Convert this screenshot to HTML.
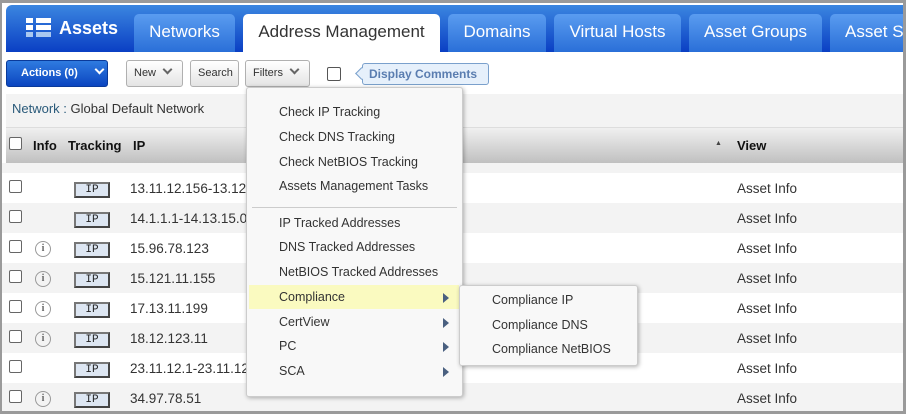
<!DOCTYPE html>
<html><head><style>
*{box-sizing:border-box;margin:0;padding:0}
body{width:906px;height:414px;overflow:hidden;background:#9a9a9a;font-family:"Liberation Sans",sans-serif;position:relative}
#frame{position:absolute;left:2px;top:3px;width:901px;height:408px;background:#fff;overflow:hidden}
.hdr{position:absolute;left:4px;top:2px;width:897px;height:47px;background:linear-gradient(#3b86e0,#0a3fc4);border-radius:6px 0 0 0}
.logo{position:absolute;left:22px;top:15px;color:#fff;font-weight:bold;font-size:18px}
.tab{position:absolute;top:11px;height:38px;background:linear-gradient(#5a9cf0,#2a6fd8);color:#fff;font-size:17px;text-align:center;line-height:36px;border-radius:5px 5px 0 0}
.tab.act{background:#fff;color:#333}
.btn{position:absolute;top:57px;height:27px;border:1px solid #b0b0b0;border-radius:3px;background:linear-gradient(#fff,#e4e4e4);font-size:11px;color:#333;line-height:25px;padding-left:7px}
.chev{display:inline-block;width:7px;height:7px;border-right:2px solid #666;border-bottom:2px solid #666;transform:rotate(45deg);margin-left:8px;position:relative;top:-3px}
.row{position:absolute;left:0;width:901px;height:30px;font-size:13.5px;color:#333}
.row.g{background:#f3f3f3}
.cb{position:absolute;left:7px;top:7px;width:13px;height:13px;border:1px solid #666;border-radius:2px;background:#fff}
.inf{position:absolute;left:33px;top:8px;width:16px;height:16px;border:1px solid #999;border-radius:50%;font-size:10px;color:#666;text-align:center;line-height:14px;font-family:"Liberation Serif",serif;font-weight:bold}
.ipb{position:absolute;left:72px;top:9px;width:36px;height:16px;border:2px solid #777;border-right-color:#444;border-bottom-color:#444;background:#dde6f2;font-size:11px;text-align:center;line-height:12px;color:#222;font-family:"Liberation Mono",monospace}
.ipt{position:absolute;left:128px;top:8px}
.vw{position:absolute;left:735px;top:8px}
.menu{position:absolute;left:244px;top:84px;width:217px;height:310px;background:#f8f8f8;border:1px solid #ccc;border-radius:3px;box-shadow:1px 1px 4px rgba(0,0,0,.3);font-size:12.5px;color:#333}
.mi{position:absolute;left:32px}
.arr{position:absolute;left:196px;width:0;height:0;border-left:6px solid #4a6080;border-top:5px solid transparent;border-bottom:5px solid transparent}
.sub{position:absolute;left:457px;top:282px;width:179px;height:81px;background:#f8f8f8;border:1px solid #ccc;border-radius:3px;box-shadow:1px 1px 4px rgba(0,0,0,.3);font-size:12.5px;color:#333}
</style></head><body>
<div id="frame">
<div class="hdr"></div>
<svg style="position:absolute;left:24px;top:15px" width="26" height="20"><rect x="0" y="0" width="7" height="5" fill="#fff"/><rect x="10" y="0" width="15" height="5" fill="#fff"/><rect x="0" y="7" width="7" height="5" fill="#fff"/><rect x="10" y="7" width="15" height="5" fill="#fff"/><rect x="0" y="14" width="7" height="5" fill="#aac8f0"/><rect x="10" y="14" width="15" height="5" fill="#aac8f0"/></svg>
<div class="logo" style="left:57px">Assets</div>
<div class="tab" style="left:132px;width:101px">Networks</div>
<div class="tab act" style="left:241px;width:197px">Address Management</div>
<div class="tab" style="left:446px;width:98px">Domains</div>
<div class="tab" style="left:552px;width:127px">Virtual Hosts</div>
<div class="tab" style="left:687px;width:133px">Asset Groups</div>
<div class="tab" style="left:828px;width:90px;text-align:left;padding-left:15px">Asset S</div>
<div class="btn" style="left:4px;width:102px;background:linear-gradient(#2f7be0,#0b45c0);color:#fff;border-color:#0a3a9a;font-weight:bold;padding-left:14px">Actions (0)<span class="chev" style="border-color:#fff;margin-left:18px"></span></div>
<div class="btn" style="left:124px;width:57px">New<span class="chev"></span></div>
<div class="btn" style="left:188px;width:49px">Search</div>
<div class="btn" style="left:243px;width:65px">Filters<span class="chev"></span></div>
<div style="position:absolute;left:325px;top:64px;width:14px;height:14px;border:1px solid #555;border-radius:2px"></div>
<div style="position:absolute;left:360px;top:60px;width:127px;height:22px;background:#e6f0fb;border:1px solid #7aa0cc;border-radius:3px;font-size:12px;font-weight:bold;color:#5a7db0;line-height:20px;padding-left:6px">Display Comments</div>
<div style="position:absolute;left:355px;top:66px;width:9px;height:9px;background:#e6f0fb;border-left:1px solid #7aa0cc;border-bottom:1px solid #7aa0cc;transform:rotate(45deg)"></div>
<div style="position:absolute;left:4px;top:91px;width:897px;height:33px;background:#f3f3f3;font-size:13px;color:#2a5a7a;line-height:30px;padding-left:6px">Network : <span style="color:#333">Global Default Network</span></div>
<div style="position:absolute;left:4px;top:124px;width:897px;height:36px;background:linear-gradient(#f0f0f0,#c0c0c0);border-top:1px solid #ddd;font-size:13px;font-weight:bold;color:#111">
<div class="cb" style="left:3px;top:9px"></div>
<span style="position:absolute;left:27px;top:10px">Info</span><span style="position:absolute;left:62px;top:10px">Tracking</span><span style="position:absolute;left:127px;top:10px">IP</span><span style="position:absolute;left:709px;top:12px;font-size:7px;color:#444">▲</span><span style="position:absolute;left:731px;top:10px">View</span></div>
<div class="row g" style="top:160px;height:10px"></div>
<div class="row" style="top:170px"><div class="cb"></div><div class="ipb">IP</div><span class="ipt">13.11.12.156-13.12</span><span class="vw">Asset Info</span></div>
<div class="row g" style="top:200px"><div class="cb"></div><div class="ipb">IP</div><span class="ipt">14.1.1.1-14.13.15.0</span><span class="vw">Asset Info</span></div>
<div class="row" style="top:230px"><div class="cb"></div><div class="inf">i</div><div class="ipb">IP</div><span class="ipt">15.96.78.123</span><span class="vw">Asset Info</span></div>
<div class="row g" style="top:260px"><div class="cb"></div><div class="inf">i</div><div class="ipb">IP</div><span class="ipt">15.121.11.155</span><span class="vw">Asset Info</span></div>
<div class="row" style="top:290px"><div class="cb"></div><div class="inf">i</div><div class="ipb">IP</div><span class="ipt">17.13.11.199</span><span class="vw">Asset Info</span></div>
<div class="row g" style="top:320px"><div class="cb"></div><div class="inf">i</div><div class="ipb">IP</div><span class="ipt">18.12.123.11</span><span class="vw">Asset Info</span></div>
<div class="row" style="top:350px"><div class="cb"></div><div class="ipb">IP</div><span class="ipt">23.11.12.1-23.11.12</span><span class="vw">Asset Info</span></div>
<div class="row g" style="top:380px"><div class="cb"></div><div class="inf">i</div><div class="ipb">IP</div><span class="ipt">34.97.78.51</span><span class="vw">Asset Info</span></div>
<div class="menu">
<span class="mi" style="top:17px">Check IP Tracking</span>
<span class="mi" style="top:42px">Check DNS Tracking</span>
<span class="mi" style="top:67px">Check NetBIOS Tracking</span>
<span class="mi" style="top:91px">Assets Management Tasks</span>
<div style="position:absolute;left:5px;top:119px;width:205px;border-top:1px solid #ccc"></div>
<span class="mi" style="top:128px">IP Tracked Addresses</span>
<span class="mi" style="top:152px">DNS Tracked Addresses</span>
<span class="mi" style="top:177px">NetBIOS Tracked Addresses</span>
<div style="position:absolute;left:2px;top:197px;width:210px;height:24px;background:#fafac0"></div>
<span class="mi" style="top:202px">Compliance</span><div class="arr" style="top:205px"></div>
<span class="mi" style="top:227px">CertView</span><div class="arr" style="top:230px"></div>
<span class="mi" style="top:251px">PC</span><div class="arr" style="top:254px"></div>
<span class="mi" style="top:276px">SCA</span><div class="arr" style="top:279px"></div>
</div>
<div class="sub">
<span class="mi" style="top:7px">Compliance IP</span>
<span class="mi" style="top:32px">Compliance DNS</span>
<span class="mi" style="top:56px">Compliance NetBIOS</span>
</div>
</div>
</body></html>
